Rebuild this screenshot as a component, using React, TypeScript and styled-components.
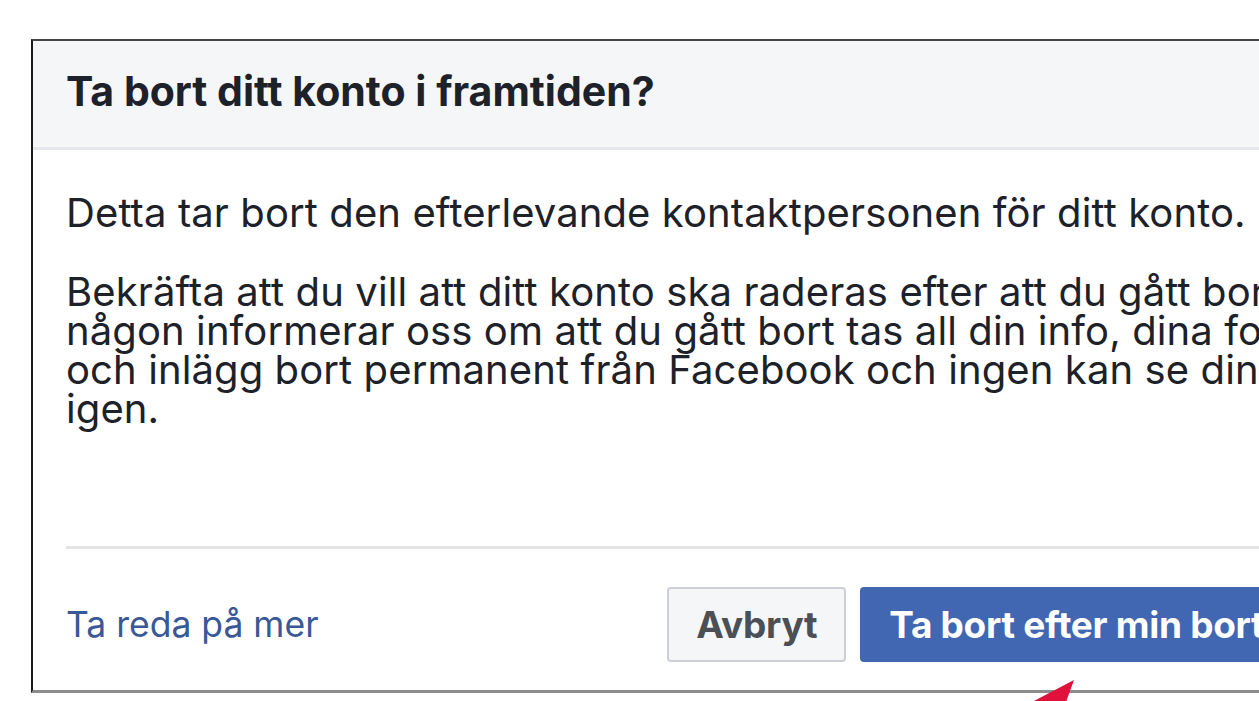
import React from "react";
import styled, { createGlobalStyle } from "styled-components";

const GlobalStyle = createGlobalStyle`
  html, body {
    margin: 0;
    padding: 0;
    background: #ffffff;
    overflow: hidden;
  }
  * { box-sizing: border-box; }
`;

const Stage = styled.div`
  position: relative;
  width: 1259px;
  height: 701px;
  overflow: hidden;
  padding: 39px 0 0 31px;
  background: #ffffff;
  font-family: Inter, "Liberation Sans", Arial, sans-serif;
`;

const Dialog = styled.div`
  width: 1385px;
  flex-shrink: 0;
  background: #ffffff;
  border-top: 2px solid #454545;
  border-left: 2px solid #1a1a1a;
  border-bottom: 3px solid #8c8c8c;
  display: flex;
  flex-direction: column;
`;

const Header = styled.div`
  height: 109px;
  background: #f5f6f7;
  border-bottom: 3px solid #e5e6e9;
  display: flex;
  align-items: center;
  padding: 0 33px 6px 33px;
`;

const Title = styled.h2`
  margin: 0;
  font-size: 41px;
  font-weight: 700;
  color: #1d2129;
  letter-spacing: 0px;
  white-space: nowrap;
`;

const Body = styled.div`
  padding: 43px 33px 118px 33px;
`;

const Paragraph = styled.p<{ $gap?: number }>`
  margin: 0 0 ${(p) => p.$gap ?? 0}px 0;
  font-size: 40px;
  line-height: 39px;
  color: #1d2129;
  white-space: nowrap;
  letter-spacing: 0.1px;
`;

const Separator = styled.hr`
  margin: 0 33px;
  border: 0;
  border-top: 3px solid #e3e4e6;
`;

const Footer = styled.div`
  display: flex;
  align-items: center;
  justify-content: space-between;
  padding: 38px 33px 28px 33px;
`;

const Link = styled.a`
  font-size: 35.5px;
  color: #385898;
  text-decoration: none;
  cursor: pointer;
`;

const Actions = styled.div`
  display: flex;
  gap: 14px;
  flex-shrink: 0;
`;

const Button = styled.button<{ $primary?: boolean }>`
  height: 75px;
  padding: 0 27px;
  border-radius: 4px;
  font-family: inherit;
  font-size: 37px;
  font-weight: 700;
  letter-spacing: -0.3px;
  white-space: nowrap;
  cursor: pointer;
  border: 2px solid ${(p) => (p.$primary ? "#4267b2" : "#ccd0d5")};
  background: ${(p) => (p.$primary ? "#4267b2" : "#f5f6f7")};
  color: ${(p) => (p.$primary ? "#ffffff" : "#4b4f56")};
`;

const Arrow = styled.svg`
  position: absolute;
  left: 1028px;
  top: 678px;
`;

export default function App() {
  return (
    <>
      <GlobalStyle />
      <Stage>
        <Dialog>
          <Header>
            <Title>Ta bort ditt konto i framtiden?</Title>
          </Header>
          <Body>
            <Paragraph $gap={40}>
              Detta tar bort den efterlevande kontaktpersonen för ditt konto.
            </Paragraph>
            <Paragraph>
              Bekräfta att du vill att ditt konto ska raderas efter att du gått bort. När
              <br />
              någon informerar oss om att du gått bort tas all din info, dina foton
              <br />
              och inlägg bort permanent från Facebook och ingen kan se din profil
              <br />
              igen.
            </Paragraph>
          </Body>
          <Separator />
          <Footer>
            <Link>Ta reda på mer</Link>
            <Actions>
              <Button>Avbryt</Button>
              <Button $primary>Ta bort efter min bortgång</Button>
            </Actions>
          </Footer>
        </Dialog>
        <Arrow width="50" height="24" viewBox="0 0 50 24">
          <polygon points="46,2 4,24 38,24" fill="#e0123c" />
        </Arrow>
      </Stage>
    </>
  );
}
